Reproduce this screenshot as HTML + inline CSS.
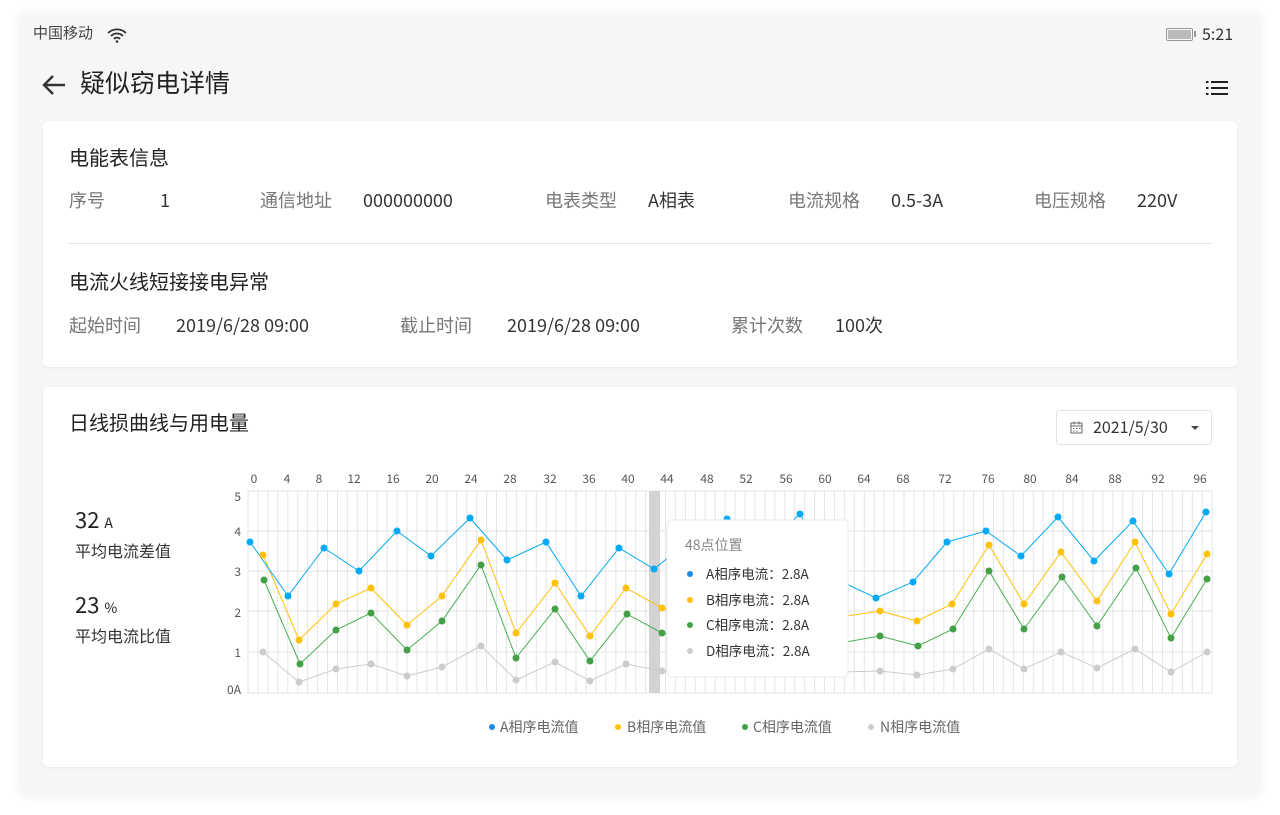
<!DOCTYPE html>
<html><head><meta charset="utf-8"><style>
*{margin:0;padding:0;box-sizing:border-box}
body{width:1280px;height:815px;background:#fff;font-family:"Noto Sans CJK SC","Liberation Sans",sans-serif;line-height:1.2;position:relative;overflow:hidden;color:#333}
.dev{position:absolute;left:20px;top:16px;width:1240px;height:778px;background:#f5f6f8;box-shadow:0 0 12px rgba(0,0,0,.08)}
.a{position:absolute;white-space:nowrap}
.card{position:absolute;background:#fff;border-radius:6px;box-shadow:0 1px 4px rgba(0,0,0,.05)}
.lbl{color:#777;font-size:18px}
.val{color:#333;font-size:18px}
</style></head><body>
<div class="dev"></div>
<div class="a" style="left:33px;top:24px;font-size:15px;color:#444">中国移动</div>
<svg class="a" style="left:106px;top:27px" width="22" height="16" viewBox="0 0 22 16"><path d="M2 6a13 13 0 0 1 18 0M5 9a8.5 8.5 0 0 1 12 0M8 12a4 4 0 0 1 6 0" fill="none" stroke="#333" stroke-width="1.8"/><circle cx="11" cy="14.5" r="1.3" fill="#333"/></svg>
<div class="a" style="left:1166px;top:28px;width:27px;height:13px;border:1.5px solid #999;border-radius:2px;padding:1px"><div style="background:#bbb;width:100%;height:100%"></div></div>
<div class="a" style="left:1194px;top:31px;width:2px;height:6px;background:#999"></div>
<div class="a" style="left:1202px;top:24px;font-size:16px;color:#333">5:21</div>
<svg class="a" style="left:40px;top:72px" width="28" height="26" viewBox="0 0 28 26"><path d="M25 13H4M13 4l-9 9 9 9" fill="none" stroke="#333" stroke-width="2.4"/></svg>
<div class="a" style="left:80px;top:67px;font-size:25px;color:#222">疑似窃电详情</div>
<svg class="a" style="left:1206px;top:80px" width="24" height="18" viewBox="0 0 24 18"><g fill="#222"><rect x="0" y="1" width="2.5" height="2"/><rect x="0" y="7" width="2.5" height="2"/><rect x="0" y="13" width="2.5" height="2"/><rect x="5" y="1" width="17" height="2"/><rect x="5" y="7" width="17" height="2"/><rect x="5" y="13" width="17" height="2"/></g></svg>

<div class="card" style="left:43px;top:121px;width:1194px;height:246px"></div>
<div class="a" style="left:69px;top:145px;font-size:20px;color:#222">电能表信息</div>
<div class="a lbl" style="left:69px;top:190px">序号</div><div class="a val" style="left:160px;top:190px">1</div>
<div class="a lbl" style="left:260px;top:190px">通信地址</div><div class="a val" style="left:363px;top:190px">000000000</div>
<div class="a lbl" style="left:545px;top:190px">电表类型</div><div class="a val" style="left:648px;top:190px">A相表</div>
<div class="a lbl" style="left:788px;top:190px">电流规格</div><div class="a val" style="left:891px;top:190px">0.5-3A</div>
<div class="a lbl" style="left:1034px;top:190px">电压规格</div><div class="a val" style="left:1137px;top:190px">220V</div>
<div class="a" style="left:68px;top:243px;width:1144px;height:1px;background:#e5e5e5"></div>
<div class="a" style="left:69px;top:269px;font-size:20px;color:#222">电流火线短接接电异常</div>
<div class="a lbl" style="left:69px;top:315px">起始时间</div><div class="a val" style="left:176px;top:315px">2019/6/28 09:00</div>
<div class="a lbl" style="left:400px;top:315px">截止时间</div><div class="a val" style="left:507px;top:315px">2019/6/28 09:00</div>
<div class="a lbl" style="left:731px;top:315px">累计次数</div><div class="a val" style="left:835px;top:315px">100次</div>

<div class="card" style="left:43px;top:387px;width:1194px;height:380px"></div>
<div class="a" style="left:69px;top:410px;font-size:20px;color:#222">日线损曲线与用电量</div>
<div class="a" style="left:1056px;top:410px;width:156px;height:35px;border:1px solid #e2e4e8;border-radius:3px"></div>
<svg class="a" style="left:1070px;top:421px" width="13" height="13" viewBox="0 0 13 13"><rect x="1" y="2" width="11" height="10" fill="none" stroke="#666" stroke-width="1"/><path d="M1 5h11M4 0.5v3M9 0.5v3" stroke="#666"/><g fill="#666"><rect x="3" y="7" width="1.5" height="1"/><rect x="6" y="7" width="1.5" height="1"/><rect x="9" y="7" width="1.5" height="1"/><rect x="3" y="9.5" width="1.5" height="1"/><rect x="6" y="9.5" width="1.5" height="1"/></g></svg>
<div class="a" style="left:1093px;top:417px;font-size:16px;color:#333">2021/5/30</div>
<div class="a" style="left:1191px;top:426px;border:4px solid transparent;border-top:4px solid #444"></div>

<div class="a" style="left:75px;top:506px;font-size:22px;color:#222">32 <span style="font-size:14px">A</span></div>
<div class="a" style="left:75px;top:541px;font-size:16px;color:#333">平均电流差值</div>
<div class="a" style="left:75px;top:591px;font-size:22px;color:#222">23 <span style="font-size:14px">%</span></div>
<div class="a" style="left:75px;top:626px;font-size:16px;color:#333">平均电流比值</div>

<svg class="a" style="left:0;top:0" width="1280" height="815" viewBox="0 0 1280 815" font-family="'Noto Sans CJK SC','Liberation Sans',sans-serif">
<g id="vg" stroke="#e3e5ea" stroke-width="1"></g>
<g stroke="#e3e5ea"><path d="M247 491H1212M247 531H1212M247 571H1212M247 611H1212M247 652H1212M247 693H1212"/></g>
<rect x="649" y="491" width="11" height="202" fill="#d3d3d3"/>
<g font-size="12" fill="#555" text-anchor="end"><text x="241" y="501">5</text><text x="241" y="536">4</text><text x="241" y="576">3</text><text x="241" y="617">2</text><text x="241" y="657">1</text><text x="241" y="694">0A</text></g>
<g font-size="12" fill="#555" text-anchor="middle">
<text x="254" y="483">0</text><text x="287" y="483">4</text><text x="319" y="483">8</text><text x="354" y="483">12</text><text x="393" y="483">16</text><text x="432" y="483">20</text><text x="471" y="483">24</text><text x="510" y="483">28</text><text x="550" y="483">32</text><text x="589" y="483">36</text><text x="628" y="483">40</text><text x="667" y="483">44</text><text x="707" y="483">48</text><text x="746" y="483">52</text><text x="786" y="483">56</text><text x="825" y="483">60</text><text x="864" y="483">64</text><text x="903" y="483">68</text><text x="945" y="483">72</text><text x="988" y="483">76</text><text x="1030" y="483">80</text><text x="1072" y="483">84</text><text x="1115" y="483">88</text><text x="1158" y="483">92</text><text x="1200" y="483">96</text></g>
<g fill="none" stroke-width="1">
<polyline stroke="#ccc" points="263,652 299,682 336,669 371,664 407,676 442,667 481,646 516,680 555,662 590,681 626,664 662,671 700,672 740,670 790,668 840,672 880,671 917,675 953,669 989,649 1024,669 1061,652 1097,668 1135,649 1171,672 1207,652"/>
<polyline stroke="#4caf50" points="264,580 300,664 336,630 371,613 407,650 442,621 481,565 516,658 555,609 590,661 627,614 662,633 700,640 740,645 800,645 840,643 880,636 918,646 953,629 989,571 1024,629 1062,577 1097,626 1136,568 1171,638 1207,579"/>
<polyline stroke="#ffc107" points="263,555 299,640 336,604 371,588 407,625 442,596 481,540 516,633 555,583 590,636 626,588 662,608 700,615 740,620 800,620 840,617 880,611 917,621 952,604 989,545 1024,604 1061,552 1097,601 1135,542 1171,614 1207,554"/>
<polyline stroke="#03a9f4" points="250,542 288,596 324,548 359,571 397,531 431,556 470,518 507,560 546,542 581,596 619,548 654,569 690,540 727,519 765,545 800,514 838,580 876,598 913,582 947,542 986,531 1021,556 1058,517 1094,561 1133,521 1169,574 1206,512"/>
</g>
<g fill="#ccc"><circle cx="263" cy="652" r="3.5"/><circle cx="299" cy="682" r="3.5"/><circle cx="336" cy="669" r="3.5"/><circle cx="371" cy="664" r="3.5"/><circle cx="407" cy="676" r="3.5"/><circle cx="442" cy="667" r="3.5"/><circle cx="481" cy="646" r="3.5"/><circle cx="516" cy="680" r="3.5"/><circle cx="555" cy="662" r="3.5"/><circle cx="590" cy="681" r="3.5"/><circle cx="626" cy="664" r="3.5"/><circle cx="662" cy="671" r="3.5"/><circle cx="880" cy="671" r="3.5"/><circle cx="917" cy="675" r="3.5"/><circle cx="953" cy="669" r="3.5"/><circle cx="989" cy="649" r="3.5"/><circle cx="1024" cy="669" r="3.5"/><circle cx="1061" cy="652" r="3.5"/><circle cx="1097" cy="668" r="3.5"/><circle cx="1135" cy="649" r="3.5"/><circle cx="1171" cy="672" r="3.5"/><circle cx="1207" cy="652" r="3.5"/></g>
<g fill="#43a047"><circle cx="264" cy="580" r="3.5"/><circle cx="300" cy="664" r="3.5"/><circle cx="336" cy="630" r="3.5"/><circle cx="371" cy="613" r="3.5"/><circle cx="407" cy="650" r="3.5"/><circle cx="442" cy="621" r="3.5"/><circle cx="481" cy="565" r="3.5"/><circle cx="516" cy="658" r="3.5"/><circle cx="555" cy="609" r="3.5"/><circle cx="590" cy="661" r="3.5"/><circle cx="627" cy="614" r="3.5"/><circle cx="662" cy="633" r="3.5"/><circle cx="880" cy="636" r="3.5"/><circle cx="918" cy="646" r="3.5"/><circle cx="953" cy="629" r="3.5"/><circle cx="989" cy="571" r="3.5"/><circle cx="1024" cy="629" r="3.5"/><circle cx="1062" cy="577" r="3.5"/><circle cx="1097" cy="626" r="3.5"/><circle cx="1136" cy="568" r="3.5"/><circle cx="1171" cy="638" r="3.5"/><circle cx="1207" cy="579" r="3.5"/></g>
<g fill="#ffc107"><circle cx="263" cy="555" r="3.5"/><circle cx="299" cy="640" r="3.5"/><circle cx="336" cy="604" r="3.5"/><circle cx="371" cy="588" r="3.5"/><circle cx="407" cy="625" r="3.5"/><circle cx="442" cy="596" r="3.5"/><circle cx="481" cy="540" r="3.5"/><circle cx="516" cy="633" r="3.5"/><circle cx="555" cy="583" r="3.5"/><circle cx="590" cy="636" r="3.5"/><circle cx="626" cy="588" r="3.5"/><circle cx="662" cy="608" r="3.5"/><circle cx="880" cy="611" r="3.5"/><circle cx="917" cy="621" r="3.5"/><circle cx="952" cy="604" r="3.5"/><circle cx="989" cy="545" r="3.5"/><circle cx="1024" cy="604" r="3.5"/><circle cx="1061" cy="552" r="3.5"/><circle cx="1097" cy="601" r="3.5"/><circle cx="1135" cy="542" r="3.5"/><circle cx="1171" cy="614" r="3.5"/><circle cx="1207" cy="554" r="3.5"/></g>
<g fill="#03a9f4"><circle cx="250" cy="542" r="3.5"/><circle cx="288" cy="596" r="3.5"/><circle cx="324" cy="548" r="3.5"/><circle cx="359" cy="571" r="3.5"/><circle cx="397" cy="531" r="3.5"/><circle cx="431" cy="556" r="3.5"/><circle cx="470" cy="518" r="3.5"/><circle cx="507" cy="560" r="3.5"/><circle cx="546" cy="542" r="3.5"/><circle cx="581" cy="596" r="3.5"/><circle cx="619" cy="548" r="3.5"/><circle cx="654" cy="569" r="3.5"/><circle cx="727" cy="519" r="3.5"/><circle cx="800" cy="514" r="3.5"/><circle cx="876" cy="598" r="3.5"/><circle cx="913" cy="582" r="3.5"/><circle cx="947" cy="542" r="3.5"/><circle cx="986" cy="531" r="3.5"/><circle cx="1021" cy="556" r="3.5"/><circle cx="1058" cy="517" r="3.5"/><circle cx="1094" cy="561" r="3.5"/><circle cx="1133" cy="521" r="3.5"/><circle cx="1169" cy="574" r="3.5"/><circle cx="1206" cy="512" r="3.5"/></g>
<rect x="667" y="520" width="181" height="157" rx="4" fill="#fff" stroke="#e8eaee"/>
<text x="685" y="550" font-size="14" fill="#888">48点位置</text>
<g font-size="13.5" fill="#333"><circle cx="690" cy="574" r="3" fill="#1e88e5"/><text x="706" y="579">A相序电流：2.8A</text>
<circle cx="690" cy="600" r="3" fill="#ffc107"/><text x="706" y="605">B相序电流：2.8A</text>
<circle cx="690" cy="625" r="3" fill="#43a047"/><text x="706" y="630">C相序电流：2.8A</text>
<circle cx="690" cy="651" r="3" fill="#ccc"/><text x="706" y="656">D相序电流：2.8A</text></g>
<g font-size="14" fill="#666"><circle cx="492" cy="727" r="3" fill="#1e88e5"/><text x="500" y="732">A相序电流值</text>
<circle cx="618" cy="727" r="3" fill="#ffc107"/><text x="627" y="732">B相序电流值</text>
<circle cx="745" cy="727" r="3" fill="#43a047"/><text x="753" y="732">C相序电流值</text>
<circle cx="871" cy="727" r="3" fill="#ccc"/><text x="880" y="732">N相序电流值</text></g>
</svg>
<script>
var g=document.getElementById('vg'),s='';for(var i=0;i<=97;i++){var x=248+i*9.94;s+='M'+x.toFixed(1)+' 491V693';}
var p=document.createElementNS('http://www.w3.org/2000/svg','path');p.setAttribute('d',s);g.appendChild(p);
</script>
</body></html>
